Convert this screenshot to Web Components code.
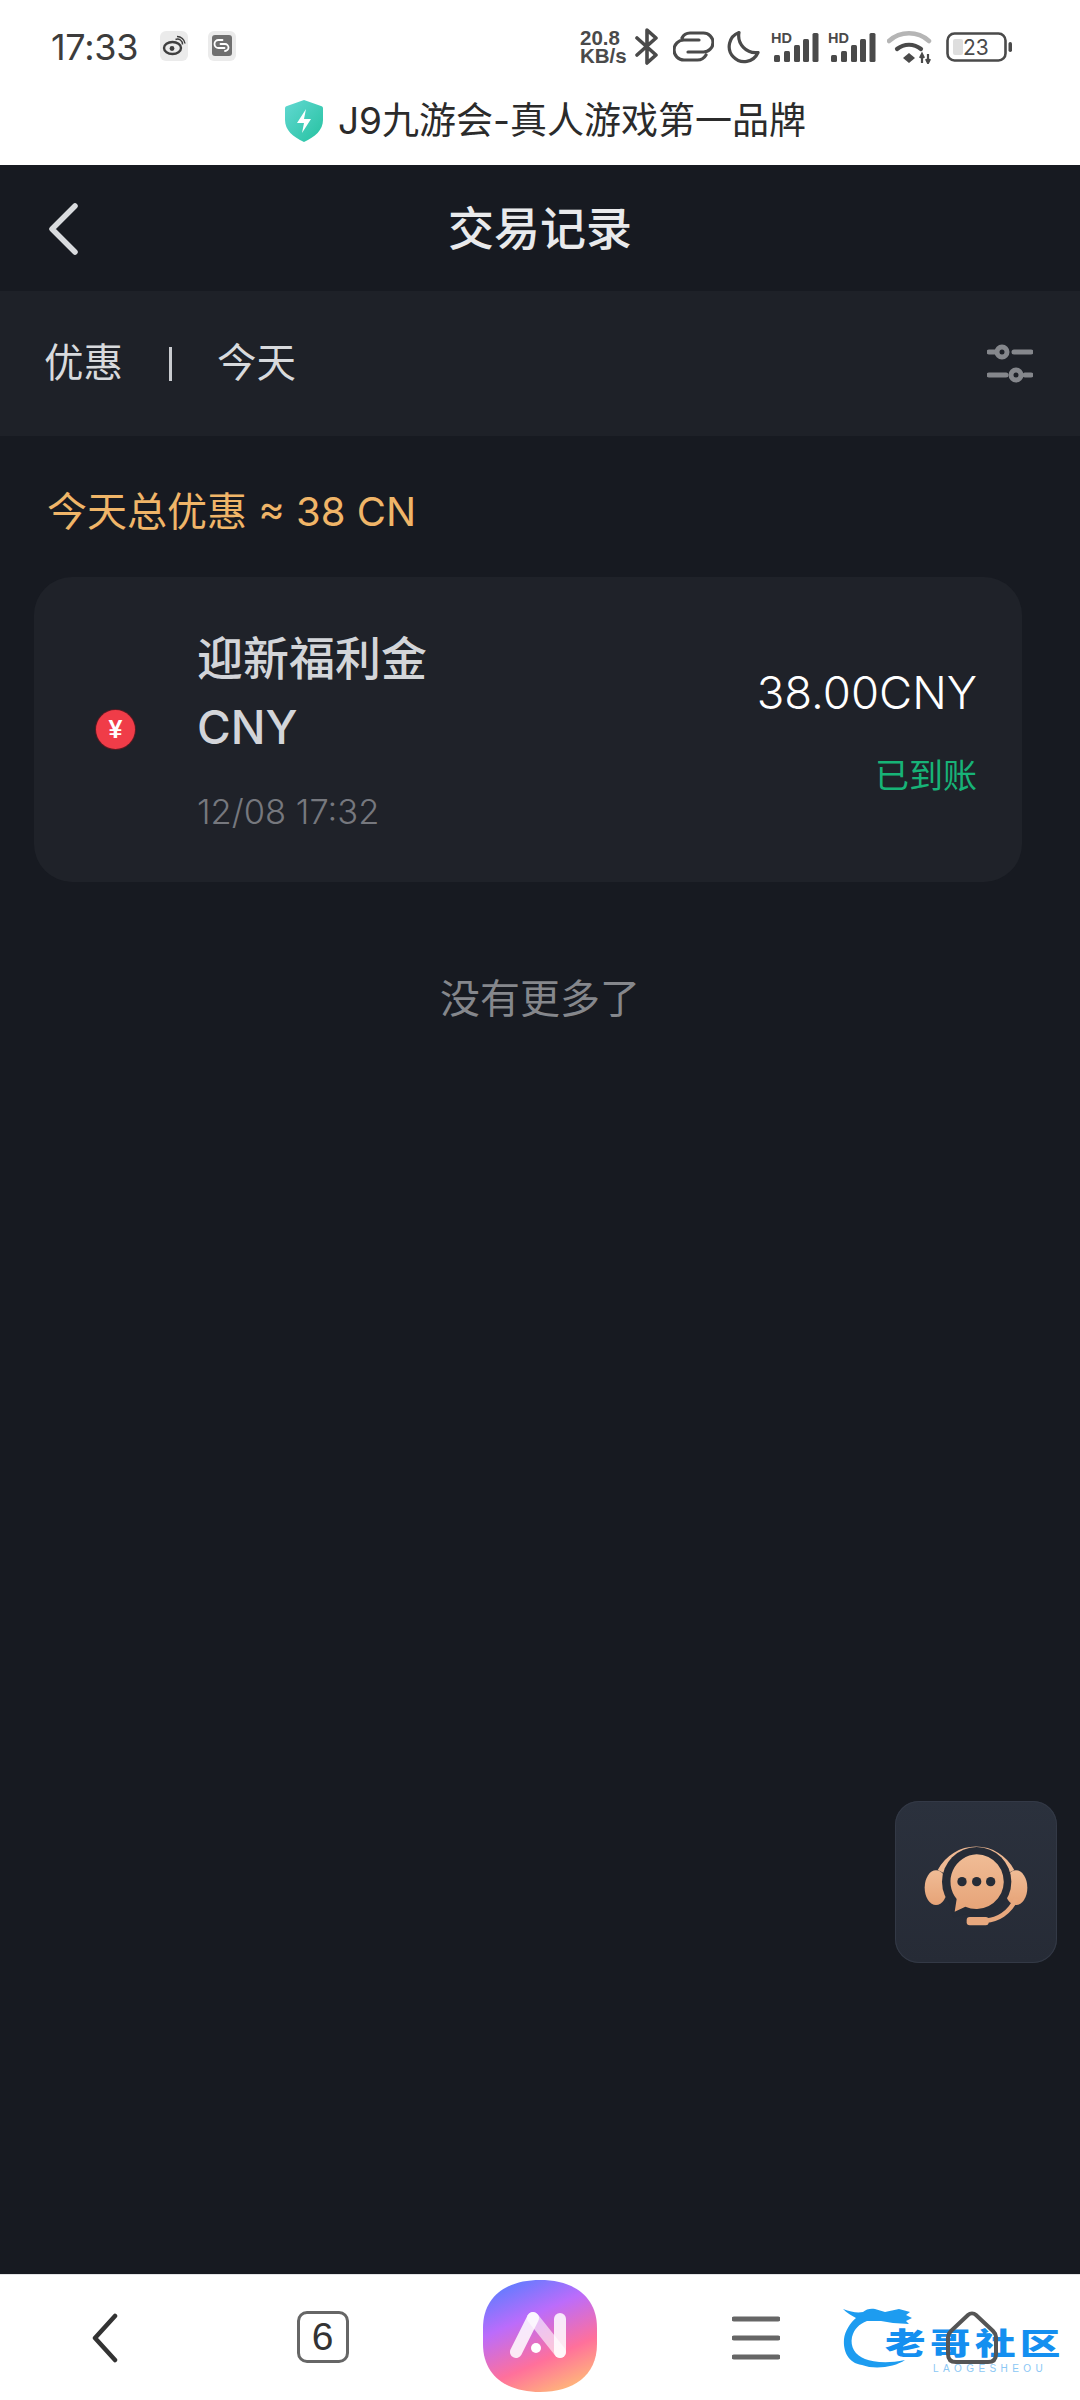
<!DOCTYPE html>
<html lang="zh"><head><meta charset="utf-8"><title>交易记录</title>
<style>
html,body{margin:0;padding:0;background:#171a21}
body{width:1080px;height:2400px;font-family:Inter,"Noto Sans CJK SC",sans-serif;overflow:hidden}
app-page{display:flex;flex-direction:column;height:2400px}
</style></head><body>
<app-page>
<status-bar></status-bar>
<site-banner>J9九游会-真人游戏第一品牌</site-banner>
<nav-header>交易记录</nav-header>
<filter-bar type="优惠" range="今天"></filter-bar>
<summary-line>今天总优惠 ≈ 38 CN</summary-line>
<tx-card title="迎新福利金" unit="CNY" date="12/08 17:32" amount="38.00CNY" status="已到账"></tx-card>
<end-note>没有更多了</end-note>
<support-fab></support-fab>
<bottom-nav></bottom-nav>
</app-page>
<script>
const F='Inter,"Noto Sans CJK SC",sans-serif';
function def(name,html){
  customElements.define(name,class extends HTMLElement{
    connectedCallback(){
      if(this.shadowRoot)return;
      const r=this.attachShadow({mode:'open'});
      r.innerHTML=html.replace(/\{\{(\w+)\}\}/g,(m,k)=>this.getAttribute(k)||'');
    }
  });
}
def('app-page',`<style>:host{display:flex;flex-direction:column;height:2400px;position:relative;background:#171a21}</style><slot></slot>`);

def('status-bar',`<style>
:host{display:flex;align-items:center;height:74px;padding:20px 68px 0 51px;box-sizing:border-box;background:#fff;color:#3c3c3c;font-family:${F};flex:none}
.t{font-size:36px;font-weight:400;letter-spacing:-.3px;width:109px;line-height:1}
.n{display:flex;gap:20px;margin-right:auto;margin-top:-3px}
svg{display:block;flex:none}
.r{display:flex;align-items:center;margin-top:-1px}
.sp{font:700 20.500px/18px "Liberation Sans",sans-serif;width:55px;color:#4a4a4a}
.sp div{height:18px;overflow:visible}
</style>
<div class="t">17:33</div>
<div class="n">
<svg width="28" height="30" viewBox="0 0 28 30"><rect width="28" height="30" rx="6" fill="#ebebeb"/><ellipse cx="12.500" cy="17" rx="8.500" ry="6" fill="none" stroke="#3f3f3f" stroke-width="2.400"/><circle cx="12" cy="17.500" r="2.400" fill="#3f3f3f"/><path d="M16 8.500a5 5 0 0 1 7 5M17.500 5.500a8 8 0 0 1 8 7" transform="translate(-.5 0)" fill="none" stroke="#3f3f3f" stroke-width="1.500"/></svg>
<svg width="28" height="30" viewBox="0 0 28 30"><rect width="28" height="30" rx="6" fill="#ebebeb"/><rect x="4" y="4" width="20" height="21" rx="3" fill="#6f6f6f"/><path d="M15 10.500h-4a4 4 0 0 0 0 8h6M13 14.500h4.500a3.500 3.500 0 0 1 0 7" transform="translate(-.5 -1.500)" fill="none" stroke="#fff" stroke-width="1.800" stroke-linecap="round"/></svg>
</div>
<div class="r">
<div class="sp"><div>20.8</div><div>KB/s</div></div>
<svg width="24" height="37" viewBox="0 0 24 37" style="margin-right:14px"><path d="M2 10l19 17-9 8V2l9 8L2 27" fill="none" stroke="#4a4a4a" stroke-width="3.600" stroke-linejoin="round" stroke-linecap="round"/></svg>
<svg width="41" height="31" viewBox="0 0 41 31" style="margin-right:12px"><path d="M26 9H11a10 10 0 0 0 0 20h13a10 10 0 0 0 9-5M15 21h15.500a9.500 9.500 0 0 0 0-19H17a9 9 0 0 0-8 5" fill="none" stroke="#4a4a4a" stroke-width="3.200" stroke-linecap="round"/></svg>
<svg width="34" height="34" viewBox="0 0 34 34" style="margin-right:11px"><path d="M13 2.500a15 15 0 1 0 19 20 17 17 0 0 1-19-20z" fill="none" stroke="#4a4a4a" stroke-width="3.200" stroke-linejoin="round"/></svg>
<svg width="48" height="32" viewBox="0 0 48 32" style="margin-right:9px"><text x="0" y="12" font-family="Liberation Sans" font-weight="700" font-size="14.500" fill="#4a4a4a">HD</text><g fill="#4a4a4a"><rect x="3" y="24" width="6" height="7" rx="1.500"/><rect x="13" y="20" width="6" height="11" rx="1.500"/><rect x="23" y="14" width="6" height="17" rx="1.500"/><rect x="32" y="8" width="6" height="23" rx="1.500"/><rect x="41.500" y="2" width="6" height="29" rx="1.500"/></g></svg>
<svg width="48" height="32" viewBox="0 0 48 32" style="margin-right:11px"><text x="0" y="12" font-family="Liberation Sans" font-weight="700" font-size="14.500" fill="#4a4a4a">HD</text><g fill="#4a4a4a"><rect x="3" y="24" width="6" height="7" rx="1.500"/><rect x="13" y="20" width="6" height="11" rx="1.500"/><rect x="23" y="14" width="6" height="17" rx="1.500"/><rect x="32" y="8" width="6" height="23" rx="1.500"/><rect x="41.500" y="2" width="6" height="29" rx="1.500"/></g></svg>
<svg width="46" height="34" viewBox="0 0 46 34" style="margin-right:13px"><path d="M2 11a30 30 0 0 1 40 0" fill="none" stroke="#b5b5b5" stroke-width="4.500" stroke-linecap="round"/><path d="M10 19a19 19 0 0 1 24 0" fill="none" stroke="#4a4a4a" stroke-width="4.200" stroke-linecap="round"/><path d="M16 28l6-5 6 5-6 5z" fill="#4a4a4a"/><path d="M35 24v9M33 28l2-4 2 4M41 33v-9M39 29l2 4 2-4" fill="none" stroke="#4a4a4a" stroke-width="2.200"/></svg>
<svg width="66" height="30" viewBox="0 0 66 30"><rect x="1.500" y="1.500" width="58" height="27" rx="7" fill="none" stroke="#4a4a4a" stroke-width="2.600"/><rect x="7" y="7" width="10" height="16" rx="2" fill="#dedede"/><text x="17" y="23" font-family="Inter" font-size="21" fill="#4a4a4a">23</text><rect x="62.500" y="10" width="3.500" height="10" rx="1.700" fill="#4a4a4a"/></svg>
</div>`);

def('site-banner',`<style>
:host{display:flex;justify-content:center;align-items:center;gap:15px;height:91px;background:#fff;color:#2b2b2b;font:400 37px/1 ${F};flex:none;padding:2px 0 0 12px;box-sizing:border-box}
svg{display:block;margin-left:-1px}
</style>
<svg width="38" height="42" viewBox="0 0 38 42"><defs><linearGradient id="g" x1="0" y1="0" x2="1" y2="1"><stop offset="0" stop-color="#62d8d2"/><stop offset="1" stop-color="#25c2a0"/></linearGradient></defs><path d="M19 0l17 6c2 .7 2 1.500 2 3v11c0 10-8 17-19 22C8 37 0 30 0 20V9c0-1.500 0-2.300 2-3z" fill="url(#g)"/><path d="M21 9l-9 14h7l-2 10 9-14h-7z" fill="#fff"/></svg>
<span><slot></slot></span>`);

def('nav-header',`<style>
:host{display:flex;align-items:center;justify-content:center;height:126px;background:#171a21;color:#e9eaec;font:500 46px/1 ${F};position:relative;flex:none}
svg{position:absolute;left:48px;top:38px}
</style>
<svg width="32" height="52" viewBox="0 0 32 52"><path d="M27 3L4 26l23 23" fill="none" stroke="#d9dbde" stroke-width="5.500" stroke-linecap="round" stroke-linejoin="round"/></svg>
<span><slot></slot></span>`);

def('filter-bar',`<style>
:host{display:flex;align-items:center;height:145px;background:#1e2128;color:#d8dadd;font:400 39.500px/1 ${F};padding:0 47px 0 44px;box-sizing:border-box;flex:none}
i{display:block;width:3px;height:34px;background:#c9cbcf;margin:0 45px 0 46px}
svg{margin-left:auto;display:block}
</style>
<span>{{type}}</span><i></i><span>{{range}}</span>
<svg width="46" height="40" viewBox="0 0 46 40"><g fill="none" stroke="#85878c" stroke-width="5" stroke-linecap="round"><path d="M2 8h6M27 8h17M2 31h17M38 31h6"/><circle cx="15" cy="8" r="5"/><circle cx="29" cy="31" r="5"/></g></svg>`);

def('summary-line',`<style>
:host{display:block;padding:52px 0 0 47px;height:141px;box-sizing:border-box;color:#f0b568;font:400 40px/1.200 ${F};flex:none}
</style><slot></slot>`);

def('tx-card',`<style>
:host{display:flex;align-items:center;margin:0 58px 0 34px;height:305px;background:#1f2229;border-radius:38px;padding:0 45px 0 62px;box-sizing:border-box;flex:none;font-family:${F}}
.ic{width:39px;height:39px;border-radius:50%;background:#f03c48;color:#fff;font:700 25px/39px "Liberation Sans",sans-serif;text-align:center;margin-right:62px;flex:none;box-shadow:0 0 0 1px #5c1a22}
.l{display:flex;flex-direction:column;color:#d3d5d9;padding-bottom:3px}
.a{font-size:46px;line-height:69px;font-weight:500}
.d{font-size:34.500px;line-height:40px;color:#76787e;margin-top:30px;font-weight:300}
.r{margin-left:auto;display:flex;flex-direction:column;align-items:flex-end;padding-top:2px}
.m{font-size:45.500px;line-height:56px;color:#fff;font-weight:300}
.s{font-size:34px;line-height:40px;color:#17b377;margin-top:35px}
</style>
<div class="ic">¥</div>
<div class="l"><div class="a">{{title}}</div><div class="a">{{unit}}</div><div class="d">{{date}}</div></div>
<div class="r"><div class="m">{{amount}}</div><div class="s">{{status}}</div></div>`);

def('end-note',`<style>
:host{display:block;text-align:center;padding-top:93px;color:#85878c;font:400 40px/48px ${F};flex:1}
</style><slot></slot>`);

def('support-fab',`<style>
:host{position:absolute;left:895px;top:1801px;width:162px;height:162px;border-radius:24px;background:linear-gradient(#2b313d,#262b36);box-shadow:inset 0 0 0 1px #333946;display:flex;align-items:center;justify-content:center}
svg{display:block;margin-top:4px}
</style>
<svg width="104" height="88" viewBox="192 205 312 264"><defs><linearGradient id="p" x1="0" y1="0" x2="0" y2="1"><stop offset="0" stop-color="#f0bc96"/><stop offset="1" stop-color="#e6a377"/></linearGradient></defs>
<ellipse cx="228" cy="348" rx="34" ry="52" fill="url(#p)"/><ellipse cx="468" cy="348" rx="34" ry="52" fill="url(#p)"/>
<path d="M243 300A118 118 0 0 1 453 300" fill="none" stroke="#efb993" stroke-width="22"/>
<path d="M468 380C450 425 410 445 378 447" fill="none" stroke="#e8a87e" stroke-width="14"/>
<rect x="320" y="436" width="66" height="25" rx="9" fill="#e8a87e"/>
<circle cx="350" cy="330" r="104" fill="#262c37"/><path d="M260 370l20 68 70-20z" fill="#262c37"/>
<path d="M350 248a82 82 0 1 1-34 157l-32 15 6-38a82 82 0 0 1 60-134z" fill="url(#p)"/>
<g fill="#262c37"><circle cx="306" cy="330" r="14"/><circle cx="350" cy="330" r="14"/><circle cx="392" cy="330" r="14"/></g></svg>`);

def('bottom-nav',`<style>
:host{display:grid;grid-template-columns:repeat(5,216px);height:126px;background:#fff;flex:none;position:relative;align-items:center;justify-items:center;border-top:1px solid #e4e4e6;box-sizing:border-box}
svg{display:block}
.back{margin-right:6px}
.box{width:52px;height:52px;box-sizing:border-box;border:3.500px solid #666;border-radius:10px;font:400 39px/45px "Liberation Sans",sans-serif;color:#333;text-align:center;margin-right:3px;margin-top:-2px}
.logo{margin-top:-4px}
.mark{position:absolute;left:842px;top:30px;width:224px;height:70px}
.cn{position:absolute;left:43px;top:21px;display:block;height:30px;font:900 28px/30px "Noto Sans CJK SC",sans-serif;letter-spacing:3px;white-space:nowrap;transform:scale(1.45,1.05);transform-origin:left center;color:#148ff0}
.en{position:absolute;left:91px;top:58px;display:block;height:12px;font:500 10px/12px "Liberation Sans",sans-serif;letter-spacing:4.400px;color:#8cc8f5;white-space:nowrap}
.home{position:relative}
</style>
<svg class="back" width="26" height="50" viewBox="0 0 26 50"><path d="M23 3L3 25l20 22" fill="none" stroke="#333" stroke-width="4.500" stroke-linecap="round" stroke-linejoin="round"/></svg>
<div class="box">6</div>
<svg class="logo" width="114" height="112" viewBox="0 0 114 112"><defs><linearGradient id="a" x1=".2" y1="0" x2=".65" y2="1"><stop offset="0" stop-color="#5a7dff"/><stop offset=".35" stop-color="#bb6cfb"/><stop offset=".72" stop-color="#ff709b"/><stop offset="1" stop-color="#ffb27c"/></linearGradient></defs><path d="M57 0C90 0 114 16 114 48v16c0 32-24 48-57 48S0 96 0 64V48C0 16 24 0 57 0z" fill="url(#a)"/><g fill="none" stroke-linecap="round" stroke-width="12"><path d="M77 39v33" stroke="#fff" stroke-opacity=".85"/><path d="M33 72L50 38" stroke="#fff" stroke-opacity=".85"/><path d="M50 38L77 72" stroke="#fff" stroke-opacity=".6"/></g><circle cx="53" cy="68" r="5" fill="#fff"/></svg>
<svg width="48" height="44" viewBox="0 0 48 44"><path d="M2 3h44M2 22h44M2 41h44" stroke="#666" stroke-width="5" stroke-linecap="round"/></svg>
<div class="mark">
<svg style="position:absolute;left:0;top:0" width="76" height="70" viewBox="0 0 76 70"><path d="M1 4c8 3 14 4 20 3 3-3 8-4 12-3l10 3 14-3 11 3-4 3 6 3-6 3 3 3-16-1-12-2-14 0c-8 3-13 8-15 16-2 10 3 18 13 22 8 3 22 5 40 1-10 7-30 10-43 5C6 58 1 46 2 34 3 26 8 18 14 13 9 10 5 8 1 4z" fill="#1d9cf0"/></svg>
<span class="cn">老哥社区</span><span class="en">LAOGESHEOU</span></div>
<svg class="home" width="52" height="55" viewBox="0 0 52 55"><path d="M5 21L22 5a6 6 0 0 1 8 0l17 16c2 2 3 3 3 6v17c0 6-3 8-8 8H10c-5 0-8-2-8-8V27c0-3 1-4 3-6z" fill="none" stroke="#555" stroke-width="4"/></svg>`);
</script>
</body></html>
